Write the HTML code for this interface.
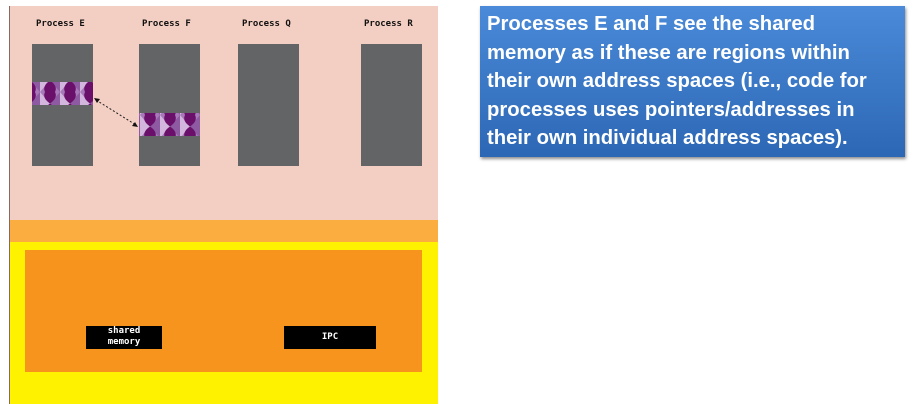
<!DOCTYPE html>
<html><head><meta charset="utf-8"><style>
body{margin:0;width:915px;height:404px;background:#fff;position:relative;overflow:hidden;font-family:"DejaVu Sans Mono","Liberation Mono",monospace}
.a{position:absolute}
.lbl{font-weight:bold;font-size:9px;color:#111;top:19px}
.box{background:#636466;top:44px;height:122px;width:61px}
.blk{background:#000;color:#fff;font-weight:bold;font-size:9px;text-align:center;line-height:11px}
</style></head><body>
<div class="a" style="left:9px;top:6px;width:428px;height:214px;background:#f3cec2;border-left:1px solid #8a6a60"></div>
<div class="a" style="left:9px;top:220px;width:428px;height:22px;background:#fbad40;border-left:1px solid #8a6a60"></div>
<div class="a" style="left:9px;top:242px;width:428px;height:162px;background:#fff200;border-left:1px solid #8a6a60"></div>
<div class="a" style="left:25px;top:250px;width:397px;height:122px;background:#f7941e"></div>
<div class="a lbl" style="left:36px">Process E</div>
<div class="a lbl" style="left:142px">Process F</div>
<div class="a lbl" style="left:242px">Process Q</div>
<div class="a lbl" style="left:364px">Process R</div>
<div class="a box" style="left:32px"></div>
<div class="a box" style="left:139px"></div>
<div class="a box" style="left:238px"></div>
<div class="a box" style="left:361px"></div>
<svg class="a" style="left:0;top:0" width="440" height="200">
<defs><pattern id="p" width="20" height="23" patternUnits="userSpaceOnUse">
<rect width="20" height="23" fill="#a779b8"/>
<path d="M0 0L10 11.5L0 23Z" fill="#d2b6dd"/>
<path d="M10 11.5L20 0V23Z" fill="#8e5aa2"/>
<path d="M10 11.5Q2 6 5 0H15Q18 6 10 11.5Z M10 11.5Q2 17 5 23H15Q18 17 10 11.5Z" fill="#6a0f6a"/>
</pattern></defs>
<rect x="32" y="82" width="61" height="23" fill="url(#p)"/>
<rect x="139" y="113" width="61" height="23" fill="url(#p)"/>
<line x1="96" y1="100" x2="136" y2="125" stroke="#222" stroke-width="1" stroke-dasharray="2,2"/>
<path d="M94 98l6 1-3 4z M138 127l-6-1 3-4z" fill="#111"/>
</svg>
<div class="a blk" style="left:86px;top:326px;width:76px;height:23px">shared<br>memory</div>
<div class="a blk" style="left:284px;top:326px;width:92px;height:23px;line-height:23px">IPC</div>
<div class="a" style="left:480px;top:6px;width:425px;height:151px;background:linear-gradient(#4a8ad8,#2c67b5);box-shadow:1px 2px 3px rgba(0,0,0,.45)"></div>
<div class="a" style="left:487px;top:10px;color:#fff;font-family:'Liberation Sans',sans-serif;font-weight:bold;font-size:20.3px;line-height:28.5px;white-space:nowrap">Processes E and F see the shared<br>memory as if these are regions within<br>their own address spaces (i.e., code for<br>processes uses pointers/addresses in<br>their own individual address spaces).</div>
</body></html>
